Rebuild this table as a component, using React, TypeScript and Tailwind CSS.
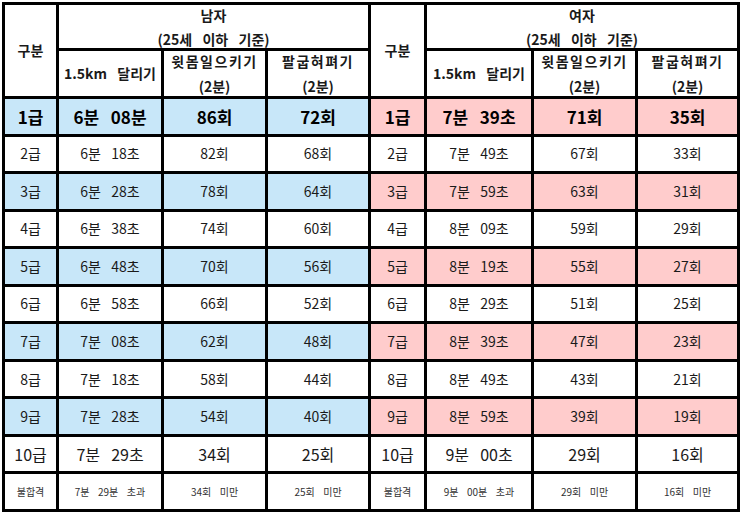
import React from "react";

type Row = { grade: string; m: string[]; w: string[] };

const rows: Row[] = [
  { grade: "1급", m: ["6분  08분", "86회", "72회"], w: ["7분  39초", "71회", "35회"] },
  { grade: "2급", m: ["6분  18초", "82회", "68회"], w: ["7분  49초", "67회", "33회"] },
  { grade: "3급", m: ["6분  28초", "78회", "64회"], w: ["7분  59초", "63회", "31회"] },
  { grade: "4급", m: ["6분  38초", "74회", "60회"], w: ["8분  09초", "59회", "29회"] },
  { grade: "5급", m: ["6분  48초", "70회", "56회"], w: ["8분  19초", "55회", "27회"] },
  { grade: "6급", m: ["6분  58초", "66회", "52회"], w: ["8분  29초", "51회", "25회"] },
  { grade: "7급", m: ["7분  08초", "62회", "48회"], w: ["8분  39초", "47회", "23회"] },
  { grade: "8급", m: ["7분  18초", "58회", "44회"], w: ["8분  49초", "43회", "21회"] },
  { grade: "9급", m: ["7분  28초", "54회", "40회"], w: ["8분  59초", "39회", "19회"] },
  { grade: "10급", m: ["7분  29초", "34회", "25회"], w: ["9분  00초", "29회", "16회"] },
  { grade: "불합격", m: ["7분  29분  초과", "34회  미만", "25회  미만"], w: ["9분  00분  초과", "29회  미만", "16회  미만"] },
];

const cell = "flex items-center justify-center text-center whitespace-pre [word-spacing:2px]";

function GroupHeader({ title }: { title: string }) {
  return (
    <>
      <div className={`${cell} row-span-2 bg-white font-bold text-[14px]`}>구분</div>
      <div className={`${cell} col-span-3 flex-col bg-white font-bold text-[14px] leading-[24px]`}>
        <span>{title}</span>
        <span>(25세  이하  기준)</span>
      </div>
    </>
  );
}

function SubHeader() {
  return (
    <>
      <div className={`${cell} bg-white font-bold text-[14px]`}>1.5km  달리기</div>
      <div className={`${cell} flex-col bg-white font-bold text-[14px] leading-[25px] tracking-[1.5px]`}>
        <span>윗몸일으키기</span>
        <span className="tracking-normal">(2분)</span>
      </div>
      <div className={`${cell} flex-col bg-white font-bold text-[14px] leading-[25px] tracking-[1.5px]`}>
        <span>팔굽혀펴기</span>
        <span className="tracking-normal">(2분)</span>
      </div>
    </>
  );
}

export default function App() {
  return (
    <div className="w-[743px] h-[513px] bg-white pl-[2px] pt-[2px]">
      <div
        className="grid h-[510px] w-[738px] gap-[3px] bg-black p-[3px] text-[#1a1a1a]"
        style={{
          fontFamily: '"Noto Sans CJK KR", "Noto Sans", sans-serif',
          gridTemplateColumns: "51px 102px 101px 100px 53px 104px 101px 99px",
          gridTemplateRows: "43px 45px repeat(11, minmax(0, 1fr))",
        }}
      >
        <GroupHeader title="남자" />
        <GroupHeader title="여자" />
        <SubHeader />
        <SubHeader />

        {rows.map((r, i) => {
          const tint = i % 2 === 0 && i < 9;
          const size =
            i === 0
              ? "text-[17px] font-bold text-black"
              : i === 9
                ? "text-[16px]"
                : i === 10
                  ? "text-[10px] text-[#333]"
                  : "text-[14px]";
          const mBg = tint ? "bg-[#c8e7f9]" : "bg-white";
          const wBg = tint ? "bg-[#ffcccc]" : "bg-white";
          return (
            <React.Fragment key={r.grade}>
              <div className={`${cell} ${mBg} ${size}`}>{r.grade}</div>
              {r.m.map((v, j) => (
                <div key={"m" + j} className={`${cell} ${mBg} ${size}`}>
                  {v}
                </div>
              ))}
              <div className={`${cell} ${wBg} ${size}`}>{r.grade}</div>
              {r.w.map((v, j) => (
                <div key={"w" + j} className={`${cell} ${wBg} ${size}`}>
                  {v}
                </div>
              ))}
            </React.Fragment>
          );
        })}
      </div>
    </div>
  );
}
